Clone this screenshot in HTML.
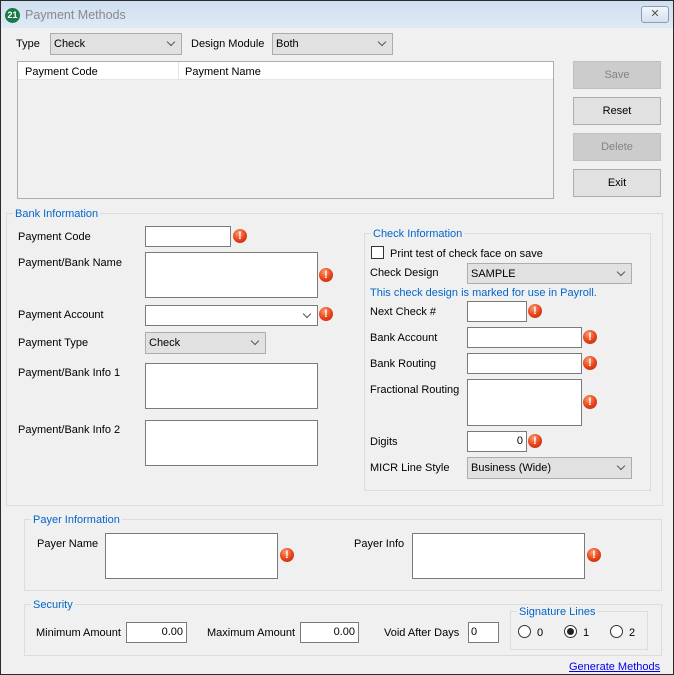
<!DOCTYPE html>
<html><head><meta charset="utf-8"><style>
*{box-sizing:border-box;margin:0;padding:0}
body{width:674px;height:675px;background:#f0f0f0;font-family:"Liberation Sans",Arial,sans-serif;font-size:11px;color:#000;position:relative;overflow:hidden}
.a{position:absolute;white-space:nowrap}
.l{position:absolute;white-space:nowrap;line-height:14px;transform:translateY(-6px)}
.tb{position:absolute;background:#fff;border:1px solid #7a7a7a}
.cb{position:absolute;background:#e1e1e1;border:1px solid #adadad;padding:4px 0 0 3px}
.cbw{position:absolute;background:#fff;border:1px solid #7a7a7a}
.cb:after,.cbw:after{content:"";position:absolute;right:7px;top:50%;width:5px;height:5px;border-right:1px solid #555;border-bottom:1px solid #555;transform:translateY(-5px) rotate(45deg)}
.err{position:absolute;width:14px;height:14px;border-radius:50%;background:radial-gradient(circle at 40% 30%,#ff9a6a,#e5401a 55%,#b52b0c);color:#fff;font-weight:bold;font-size:11px;line-height:14px;text-align:center}
.grp{position:absolute;border:1px solid #dcdcdc}
.gt{position:absolute;background:#f0f0f0;color:#0066cc;padding:0 2px;line-height:14px;top:-7px;left:6px}
.btn{position:absolute;left:573px;width:88px;height:28px;background:#e1e1e1;border:1px solid #adadad;text-align:center;line-height:27px}
.dis{background:#cccccc;border-color:#bfbfbf;color:#838383}
.num{text-align:right;padding-right:3px;line-height:19px}
.rad{position:absolute;width:13px;height:13px;border:1px solid #333;border-radius:50%;background:#fff}
</style></head><body>
<div class="a" style="left:0;top:0;width:674px;height:675px;border:1px solid #2b2b2b;z-index:5;pointer-events:none"></div>
<div class="a" style="left:0;top:0;width:674px;height:28px;background:linear-gradient(#cfdff0,#dfe9f5)"></div>
<div class="a" style="left:5px;top:8px;width:15px;height:15px;border-radius:50%;background:#1a7a4a;color:#fff;font-size:9px;font-weight:bold;text-align:center;line-height:15px">21</div>
<div class="a" style="left:25px;top:8px;color:#8a8a8a;font-size:12.5px">Payment Methods</div>
<div class="a" style="left:641px;top:6px;width:28px;height:17px;border:1px solid #8a9cb4;border-radius:3px;background:linear-gradient(#f2f6fb,#d5e0ee);text-align:center;line-height:14px;color:#555;font-size:11px">✕</div>

<div class="l" style="left:16px;top:43px">Type</div>
<div class="cb" style="left:50px;top:33px;width:132px;height:22px">Check</div>
<div class="l" style="left:191px;top:43px">Design Module</div>
<div class="cb" style="left:272px;top:33px;width:121px;height:22px">Both</div>

<div class="a" style="left:17px;top:61px;width:537px;height:138px;border:1px solid #adadad;background:#f0f0f0"></div>
<div class="a" style="left:18px;top:62px;width:535px;height:18px;background:#fff;border-bottom:1px solid #e5e5e5"></div>
<div class="a" style="left:178px;top:62px;width:1px;height:18px;background:#e5e5e5"></div>
<div class="l" style="left:25px;top:71px">Payment Code</div>
<div class="l" style="left:185px;top:71px">Payment Name</div>

<div class="btn dis" style="top:61px">Save</div>
<div class="btn" style="top:97px">Reset</div>
<div class="btn dis" style="top:133px">Delete</div>
<div class="btn" style="top:169px">Exit</div>

<div class="grp" style="left:6px;top:213px;width:657px;height:293px"><div class="gt" style="left:6px">Bank Information</div></div>
<div class="l" style="left:18px;top:236px">Payment Code</div>
<div class="tb" style="left:145px;top:226px;width:86px;height:21px"></div><div class="err" style="left:233px;top:229px">!</div>
<div class="l" style="left:18px;top:262px">Payment/Bank Name</div>
<div class="tb" style="left:145px;top:252px;width:173px;height:46px"></div><div class="err" style="left:319px;top:268px">!</div>
<div class="l" style="left:18px;top:314px">Payment Account</div>
<div class="cbw" style="left:145px;top:305px;width:173px;height:21px"></div><div class="err" style="left:319px;top:307px">!</div>
<div class="l" style="left:18px;top:342px">Payment Type</div>
<div class="cb" style="left:145px;top:332px;width:121px;height:22px">Check</div>
<div class="l" style="left:18px;top:372px">Payment/Bank Info 1</div>
<div class="tb" style="left:145px;top:363px;width:173px;height:46px"></div>
<div class="l" style="left:18px;top:429px">Payment/Bank Info 2</div>
<div class="tb" style="left:145px;top:420px;width:173px;height:46px"></div>

<div class="grp" style="left:364px;top:233px;width:287px;height:258px"><div class="gt" style="left:6px">Check Information</div></div>
<div class="a" style="left:371px;top:246px;width:13px;height:13px;border:1px solid #333;background:#fff"></div>
<div class="l" style="left:390px;top:253px">Print test of check face on save</div>
<div class="l" style="left:370px;top:272px">Check Design</div>
<div class="cb" style="left:467px;top:263px;width:165px;height:21px">SAMPLE</div>
<div class="l" style="left:370px;top:292px;color:#0066cc">This check design is marked for use in Payroll.</div>
<div class="l" style="left:370px;top:311px">Next Check #</div>
<div class="tb" style="left:467px;top:301px;width:60px;height:21px"></div><div class="err" style="left:528px;top:304px">!</div>
<div class="l" style="left:370px;top:337px">Bank Account</div>
<div class="tb" style="left:467px;top:327px;width:115px;height:21px"></div><div class="err" style="left:583px;top:330px">!</div>
<div class="l" style="left:370px;top:363px">Bank Routing</div>
<div class="tb" style="left:467px;top:353px;width:115px;height:21px"></div><div class="err" style="left:583px;top:356px">!</div>
<div class="l" style="left:370px;top:389px">Fractional Routing</div>
<div class="tb" style="left:467px;top:379px;width:115px;height:47px"></div><div class="err" style="left:583px;top:395px">!</div>
<div class="l" style="left:370px;top:441px">Digits</div>
<div class="tb num" style="left:467px;top:431px;width:60px;height:21px">0</div><div class="err" style="left:528px;top:434px">!</div>
<div class="l" style="left:370px;top:467px">MICR Line Style</div>
<div class="cb" style="left:467px;top:457px;width:165px;height:22px">Business (Wide)</div>

<div class="grp" style="left:24px;top:519px;width:638px;height:72px"><div class="gt" style="left:6px">Payer Information</div></div>
<div class="l" style="left:37px;top:543px">Payer Name</div>
<div class="tb" style="left:105px;top:533px;width:173px;height:46px"></div><div class="err" style="left:280px;top:548px">!</div>
<div class="l" style="left:354px;top:543px">Payer Info</div>
<div class="tb" style="left:412px;top:533px;width:173px;height:46px"></div><div class="err" style="left:587px;top:548px">!</div>

<div class="grp" style="left:24px;top:604px;width:638px;height:52px"><div class="gt" style="left:6px">Security</div></div>
<div class="l" style="left:36px;top:632px">Minimum Amount</div>
<div class="tb num" style="left:126px;top:622px;width:61px;height:21px">0.00</div>
<div class="l" style="left:207px;top:632px">Maximum Amount</div>
<div class="tb num" style="left:300px;top:622px;width:59px;height:21px">0.00</div>
<div class="l" style="left:384px;top:632px">Void After Days</div>
<div class="tb" style="left:468px;top:622px;width:31px;height:21px;padding-left:2px;line-height:19px">0</div>
<div class="grp" style="left:510px;top:611px;width:138px;height:39px"><div class="gt" style="left:6px">Signature Lines</div></div>
<div class="rad" style="left:518px;top:625px"></div><div class="l" style="left:537px;top:632px">0</div>
<div class="rad" style="left:564px;top:625px"><div style="position:absolute;left:2px;top:2px;width:7px;height:7px;border-radius:50%;background:#222"></div></div><div class="l" style="left:583px;top:632px">1</div>
<div class="rad" style="left:610px;top:625px"></div><div class="l" style="left:629px;top:632px">2</div>

<div class="l" style="left:569px;top:666px;color:#0000ee;text-decoration:underline">Generate Methods</div>
</body></html>
